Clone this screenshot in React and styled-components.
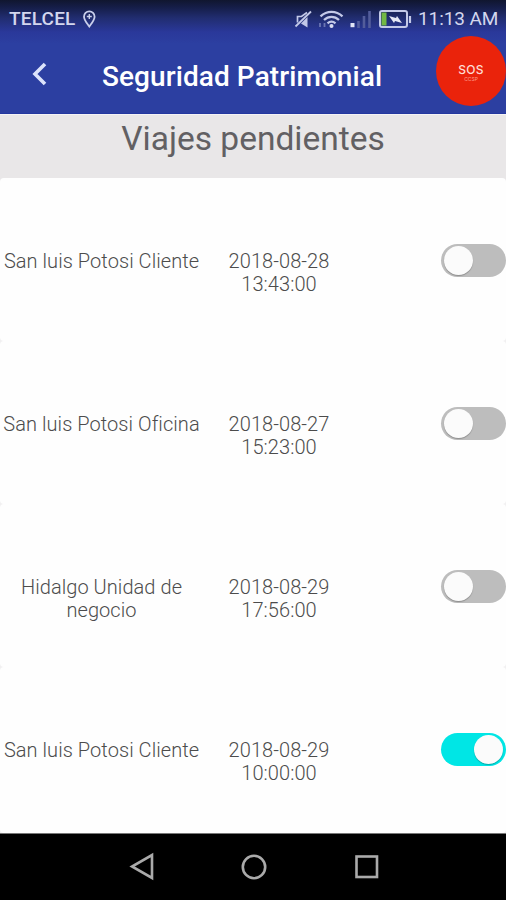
import React from 'react';
import styled, { createGlobalStyle } from 'styled-components';

const GlobalStyle = createGlobalStyle`
  * { box-sizing: border-box; }
  body { margin: 0; background: #fefefe; font-family: Roboto, sans-serif; }
`;

const Screen = styled.div`
  width: 506px;
  height: 900px;
  display: flex;
  flex-direction: column;
  overflow: hidden;
  background: #e9e7e8;
`;

const Top = styled.div`
  height: 114px;
  flex: none;
  background: linear-gradient(#10162f 0, #151d47 7px, #212d70 18px, #2a389a 32px, #2c3fa1 44px);
  border-bottom: 1px solid #2438a0;
`;

const StatusBar = styled.div`
  height: 36px;
  display: flex;
  align-items: center;
  padding: 2px 8px 0 9px;
  color: #d3d7ee;
  font-size: 19px;
  line-height: 36px;
`;

const Carrier = styled.span`
  font-weight: 500;
  width: 73px;
  white-space: nowrap;
  letter-spacing: 0.2px;
`;

const StatusIcons = styled.svg`
  display: block;
  flex: none;
  margin-left: auto;
`;

const Clock = styled.span`
  width: 80px;
  margin-left: 6px;
  white-space: nowrap;
  letter-spacing: -0.1px;
`;

const AppBar = styled.header`
  height: 70px;
  display: flex;
  align-items: center;
  padding-left: 30px;
`;

const BackButton = styled.button`
  width: 72px;
  height: 40px;
  padding: 6px 0 0;
  border: 0;
  background: none;
  display: flex;
  align-items: center;
`;

const Title = styled.h1`
  margin: 11px 0 0;
  width: 334px;
  color: #fff;
  font-size: 28px;
  line-height: 34px;
  font-weight: 500;
  letter-spacing: 0.08px;
  white-space: nowrap;
`;

const SosButton = styled.button`
  width: 70px;
  height: 70px;
  flex: none;
  border: 0;
  border-radius: 50%;
  padding: 3px 0 0;
  background: #ea230b;
  color: #ffdcd4;
  display: flex;
  flex-direction: column;
  align-items: center;
  justify-content: center;
  font-family: Inter, sans-serif;
`;

const SosLabel = styled.span`
  font-size: 12px;
  line-height: 12px;
  font-weight: 500;
  letter-spacing: 0.3px;
`;

const SosCaption = styled.span`
  font-size: 5px;
  line-height: 6px;
  color: #ff9b87;
`;

const Heading = styled.h2`
  margin: 0;
  height: 64px;
  padding-top: 4px;
  flex: none;
  text-align: center;
  color: #626063;
  border-top: 1px solid #f5f3f5;
  font-size: 33.5px;
  line-height: 40px;
  font-weight: 400;
`;

const List = styled.main`
  height: 655px;
  flex: none;
  background: linear-gradient(#e9e7e8 20px, #f1f0f1 20px);
`;

const Trip = styled.section`
  height: ${({ $last }) => ($last ? '166px' : '163px')};
  padding-top: 72px;
  display: grid;
  grid-template-columns: 203px 152px 1fr;
  background: #fefefe;
  border-radius: 4px;
  color: #4c4c4c;
  font-size: 20px;
  font-weight: 300;
  letter-spacing: 0.06px;
  line-height: 23.3px;
  text-align: center;
`;

const Place = styled.div`
  padding: 0 2px;
`;

const When = styled.div`
  display: flex;
  flex-direction: column;
`;

const Toggle = styled.button`
  width: 65px;
  height: 33px;
  margin-top: -6px;
  justify-self: end;
  padding: 2px 3px;
  display: flex;
  align-items: center;
  justify-content: ${({ $on }) => ($on ? 'flex-end' : 'flex-start')};
  border: 0;
  border-radius: 17px;
  background: ${({ $on }) => ($on ? '#00e6e5' : '#bdbdbd')};
`;

const Thumb = styled.span`
  width: 29px;
  height: 29px;
  border-radius: 50%;
  background: #fbfbfb;
  box-shadow: 0 1px 1px rgba(0, 0, 0, 0.25);
`;

const NavBar = styled.nav`
  height: 67px;
  flex: none;
  display: flex;
  justify-content: space-between;
  padding: 18px 127px 0 128px;
  background: #000;
  border-top: 1px solid #777;
`;

const trips = [
  { place: 'San luis Potosi Cliente', date: '2018-08-28', time: '13:43:00', on: false },
  { place: 'San luis Potosi Oficina', date: '2018-08-27', time: '15:23:00', on: false },
  { place: 'Hidalgo Unidad de negocio', date: '2018-08-29', time: '17:56:00', on: false },
  { place: 'San luis Potosi Cliente', date: '2018-08-29', time: '10:00:00', on: true },
];

function Status() {
  return (
    <StatusBar>
      <Carrier>TELCEL</Carrier>
      <svg width="15" height="18" viewBox="0 0 15 18" fill="none" stroke="#c9cfeb" strokeWidth="1.8">
        <path d="M7.3 16.5C5 13.2 2 10 2 6.7a5.3 5.3 0 0 1 10.6 0c0 3.3-3 6.5-5.3 9.8Z" />
        <path d="M7.3 4v5M4.8 6.5h5" strokeWidth="1.4" />
      </svg>
      <StatusIcons width="118" height="22" viewBox="294 7 118 22" fill="none" stroke="#c3c9e8">
        <path d="M297.5 21.5v-6h4l5.5-4" strokeWidth="1.7" />
        <path d="M301 22.5 307.5 16v10.5Z" fill="#c3c9e8" stroke="none" />
        <path d="M295.5 25.5 311 10.5" strokeWidth="1.8" />
        <path d="M320.5 15.4c6.5-6 15.5-6 22 0M324 19c4.5-4.2 10.5-4.2 15 0M327.5 22.4c2.5-2.2 5.5-2.2 8 0" strokeWidth="2.3" />
        <circle cx="331.5" cy="25" r="2" fill="#d9ddf1" stroke="none" />
        <path d="M320 22v4M324.5 22v4" stroke="#6b75b2" strokeWidth="1.8" />
        <path d="M350.5 26.2h4v-4.2h-4z" fill="#e0e4f5" stroke="none" />
        <path d="M358.5 27v-7M364 27V15M369.5 27V10" stroke="#535d9b" strokeWidth="2.6" />
        <rect x="380" y="10" width="27" height="16" rx="2" strokeWidth="2" />
        <path d="M381.5 11.5h5v13h-5z" fill="#72b843" stroke="none" />
        <path d="M410 15v7" strokeWidth="2.2" />
        <path d="m389 15 7 2 1-2 5 7-7-2-1 2z" fill="#e5e8f5" stroke="none" />
      </StatusIcons>
      <Clock>11:13 AM</Clock>
    </StatusBar>
  );
}

export default function App() {
  return (
    <>
      <GlobalStyle />
      <Screen>
        <Top>
          <Status />
          <AppBar>
            <BackButton aria-label="Volver">
              <svg width="18" height="24" viewBox="0 0 18 24" fill="none" stroke="#dce3fb" strokeWidth="3.6">
                <path d="M15 2 5 12l10 10" />
              </svg>
            </BackButton>
            <Title>Seguridad Patrimonial</Title>
            <SosButton>
              <SosLabel>SOS</SosLabel>
              <SosCaption>CCSP</SosCaption>
            </SosButton>
          </AppBar>
        </Top>
        <Heading>Viajes pendientes</Heading>
        <List>
          {trips.map((trip, i) => (
            <Trip key={i} $last={i === trips.length - 1}>
              <Place>{trip.place}</Place>
              <When>
                <span>{trip.date}</span>
                <span>{trip.time}</span>
              </When>
              <Toggle $on={trip.on} role="switch" aria-checked={trip.on}>
                <Thumb />
              </Toggle>
            </Trip>
          ))}
        </List>
        <NavBar>
          <svg width="28" height="30" viewBox="0 0 28 30" fill="none" stroke="#aaa" strokeWidth="2.6">
            <path d="M24 3v23L4 14.5Z" />
          </svg>
          <svg width="28" height="30" viewBox="0 0 28 30" fill="none" stroke="#aaa" strokeWidth="2.6">
            <circle cx="14" cy="15" r="11.2" />
          </svg>
          <svg width="28" height="30" viewBox="0 0 28 30" fill="none" stroke="#aaa" strokeWidth="2.6">
            <rect x="5.5" y="4.5" width="20.5" height="20.5" />
          </svg>
        </NavBar>
      </Screen>
    </>
  );
}
